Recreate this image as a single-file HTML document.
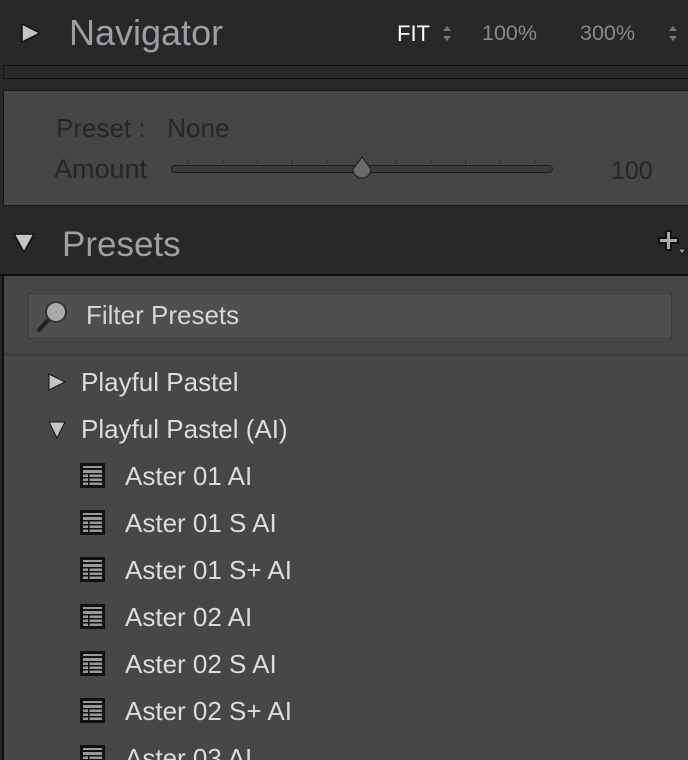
<!DOCTYPE html>
<html><head><style>
html,body{margin:0;width:688px;height:760px;overflow:hidden}
body{background:#282828;font-family:"Liberation Sans",sans-serif;position:relative}
.a{position:absolute;white-space:nowrap}
.row{position:absolute;left:125px;font-size:26px;color:#dcdcdc;line-height:30px}
.ic{position:absolute;left:80px}
</style></head><body>
<svg width="0" height="0" style="position:absolute"><defs><g id="ic"><rect x="0" y="0" width="25" height="25" fill="#111"/><rect x="3" y="3" width="19" height="2" fill="#999"/><rect x="3" y="7" width="19" height="15" fill="#999"/><g fill="#111"><rect x="3" y="10" width="19" height="1.5"/><rect x="3" y="14" width="19" height="1.5"/><rect x="3" y="18" width="19" height="1.5"/><rect x="8" y="10" width="1.5" height="12"/></g></g></defs></svg>
<svg class="a" style="left:20px;top:22px" width="22" height="22"><polygon points="2,2 20,11 2,20" fill="#c4c4c4" stroke="#111" stroke-width="1.5"/></svg>
<div class="a" style="left:69px;top:12px;font-size:36px;color:#9ca0a6">Navigator</div>
<div class="a" style="left:397px;top:21px;font-size:22px;color:#fff">FIT</div>
<svg class="a" style="left:441px;top:25px" width="12" height="18"><polygon points="6,1 10,6 2,6" fill="#777"/><polygon points="6,16 10,11 2,11" fill="#777"/></svg>
<div class="a" style="left:482px;top:21px;font-size:21.5px;color:#8a8a8a">100%</div>
<div class="a" style="left:580px;top:21px;font-size:21.5px;color:#8a8a8a">300%</div>
<svg class="a" style="left:667px;top:25px" width="12" height="18"><polygon points="6,1 10,6 2,6" fill="#777"/><polygon points="6,16 10,11 2,11" fill="#777"/></svg>
<div class="a" style="left:3px;top:65px;width:690px;height:12px;background:#2a2a2a;border:1px solid #111"></div>
<div class="a" style="left:3px;top:90px;width:690px;height:114px;background:#464646;border:1px solid #151515"></div>
<div class="a" style="left:56px;top:113px;font-size:26px;color:#262626">Preset :&nbsp;&nbsp; None</div>
<div class="a" style="left:54px;top:154px;font-size:27px;color:#262626">Amount</div>
<div class="a" style="left:611px;top:157px;font-size:25px;color:#262626">100</div>
<svg class="a" style="left:165px;top:150px" width="400" height="35">
<g stroke="#2a2a2a" stroke-width="1">
<line x1="23" y1="10" x2="23" y2="14"/><line x1="57.7" y1="10" x2="57.7" y2="14"/><line x1="92.4" y1="10" x2="92.4" y2="14"/><line x1="127.1" y1="10" x2="127.1" y2="14"/><line x1="161.8" y1="10" x2="161.8" y2="14"/><line x1="231.2" y1="10" x2="231.2" y2="14"/><line x1="265.9" y1="10" x2="265.9" y2="14"/><line x1="300.6" y1="10" x2="300.6" y2="14"/><line x1="335.3" y1="10" x2="335.3" y2="14"/><line x1="370" y1="10" x2="370" y2="14"/>
</g>
<rect x="6.5" y="15.5" width="381" height="7" rx="3.5" fill="#3c3c3c" stroke="#1e1e1e"/>
<path d="M197 7 L206 19 A8 8 0 1 1 188 19 Z" fill="#6a6a6a" stroke="#222" stroke-width="1.2"/>
</svg>
<svg class="a" style="left:12px;top:231px" width="24" height="24"><polygon points="2,3 22,3 12,21" fill="#c4c4c4" stroke="#111" stroke-width="1.5"/></svg>
<div class="a" style="left:62px;top:225px;font-size:35px;color:#a39f9a">Presets</div>
<svg class="a" style="left:656px;top:227px" width="32" height="32"><path d="M10 4h5v7h7v5h-7v7h-5v-7H3v-5h7z" fill="#aaa" stroke="#111" stroke-width="2"/><polygon points="22,22 30,22 26,27" fill="#999" stroke="#111"/></svg>
<div class="a" style="left:0;top:274px;width:688px;height:2px;background:#0e0e0e"></div>
<div class="a" style="left:2px;top:276px;width:684px;height:484px;background:#474747;border-left:2px solid #111"></div>
<div class="a" style="left:28px;top:293px;width:642px;height:44px;background:#4f4f4f;border:1px solid #3a3a3a"></div>
<svg class="a" style="left:35px;top:298px" width="36" height="36"><line x1="4" y1="32" x2="14" y2="21" stroke="#222" stroke-width="4" stroke-linecap="round"/><circle cx="21" cy="14" r="10" fill="#aaa" stroke="#333" stroke-width="2"/></svg>
<div class="a" style="left:86px;top:300px;font-size:26px;color:#d6d6d6">Filter Presets</div>
<div class="a" style="left:4px;top:353px;width:684px;height:3px;background:#3f3f3f"></div>
<svg class="a" style="left:47px;top:372px" width="20" height="20"><polygon points="2,2 18,10 2,18" fill="#c4c4c4" stroke="#111"/></svg>
<div class="row" style="left:81px;top:367px">Playful Pastel</div>
<svg class="a" style="left:47px;top:420px" width="20" height="20"><polygon points="2,2 18,2 10,18" fill="#c4c4c4" stroke="#111"/></svg>
<div class="row" style="left:81px;top:414px">Playful Pastel (AI)</div>
<svg class="ic" style="top:463px" width="25" height="25"><use href="#ic"/></svg><div class="row" style="top:461px">Aster 01 AI</div>
<svg class="ic" style="top:510px" width="25" height="25"><use href="#ic"/></svg><div class="row" style="top:508px">Aster 01 S AI</div>
<svg class="ic" style="top:557px" width="25" height="25"><use href="#ic"/></svg><div class="row" style="top:555px">Aster 01 S+ AI</div>
<svg class="ic" style="top:604px" width="25" height="25"><use href="#ic"/></svg><div class="row" style="top:602px">Aster 02 AI</div>
<svg class="ic" style="top:651px" width="25" height="25"><use href="#ic"/></svg><div class="row" style="top:649px">Aster 02 S AI</div>
<svg class="ic" style="top:698px" width="25" height="25"><use href="#ic"/></svg><div class="row" style="top:696px">Aster 02 S+ AI</div>
<svg class="ic" style="top:745px" width="25" height="25"><use href="#ic"/></svg><div class="row" style="top:743px">Aster 03 AI</div>
</body></html>
